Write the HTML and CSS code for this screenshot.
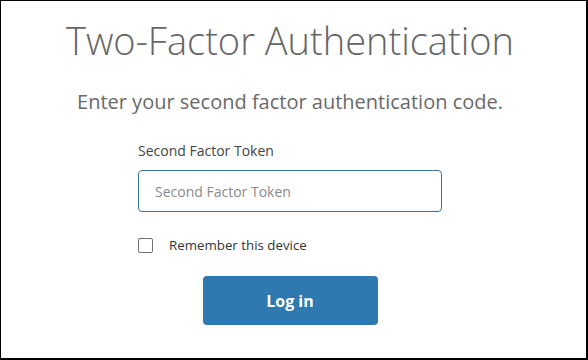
FILE: index.html
```html
<!DOCTYPE html>
<html>
<head>
<meta charset="utf-8">
<link rel="stylesheet" href="styles.css">
</head>
<body>
<div class="frame">
  <h1 class="title">Two-Factor Authentication</h1>
  <p class="subtitle">Enter your second factor authentication code.</p>
  <form class="form">
    <label class="label" for="token">Second Factor Token</label>
    <input class="input" id="token" type="text" placeholder="Second Factor Token">
    <label class="remember"><span class="checkbox"></span><span class="remember-text">Remember this device</span></label>
    <div class="actions"><button class="button" type="button">Log in</button></div>
  </form>
</div>
</body>
</html>
```

FILE: styles.css
```css
html, body {
  margin: 0;
  padding: 0;
  background: #fff;
}
.frame {
  box-sizing: border-box;
  width: 588px;
  height: 360px;
  border-style: solid;
  border-color: #000;
  border-width: 1px 2px 2px 1px;
  padding-right: 7px;
  font-family: "Open Sans", "Noto Sans", sans-serif;
  display: flex;
  flex-direction: column;
  align-items: center;
}
.title {
  margin: 13px 0 0;
  font-weight: 300;
  font-size: 38px;
  line-height: 52px;
  color: #666;
  letter-spacing: 0;
}
.subtitle {
  margin: 23px 0 0;
  font-size: 20px;
  font-weight: 400;
  line-height: 26px;
  color: #6a6a6a;
}
.form {
  width: 304px;
  margin-top: 27px;
  display: flex;
  flex-direction: column;
}
.label {
  font-size: 14px;
  color: #444;
  line-height: 18px;
}
.input {
  box-sizing: border-box;
  margin-top: 10px;
  width: 304px;
  height: 42px;
  border: 1px solid #3e7199;
  border-radius: 4px;
  padding: 0 16px;
  font-family: inherit;
  font-size: 14px;
  color: #333;
  outline: none;
}
.input::placeholder {
  color: #8a8a8a;
}
.remember {
  margin-top: 24px;
  display: flex;
  align-items: center;
  gap: 16px;
}
.checkbox {
  box-sizing: border-box;
  width: 15px;
  height: 15px;
  border: 1px solid #707070;
  border-radius: 2px;
  background: #fff;
}
.remember-text {
  font-size: 13.3px;
  color: #333;
  line-height: 18px;
}
.actions {
  margin-top: 22px;
  display: flex;
  justify-content: center;
}
.button {
  width: 175px;
  height: 49px;
  border: 0;
  border-radius: 4px;
  background: #2e79b0;
  color: #fff;
  font-family: inherit;
  font-weight: 700;
  font-size: 16px;
  cursor: pointer;
}
```
